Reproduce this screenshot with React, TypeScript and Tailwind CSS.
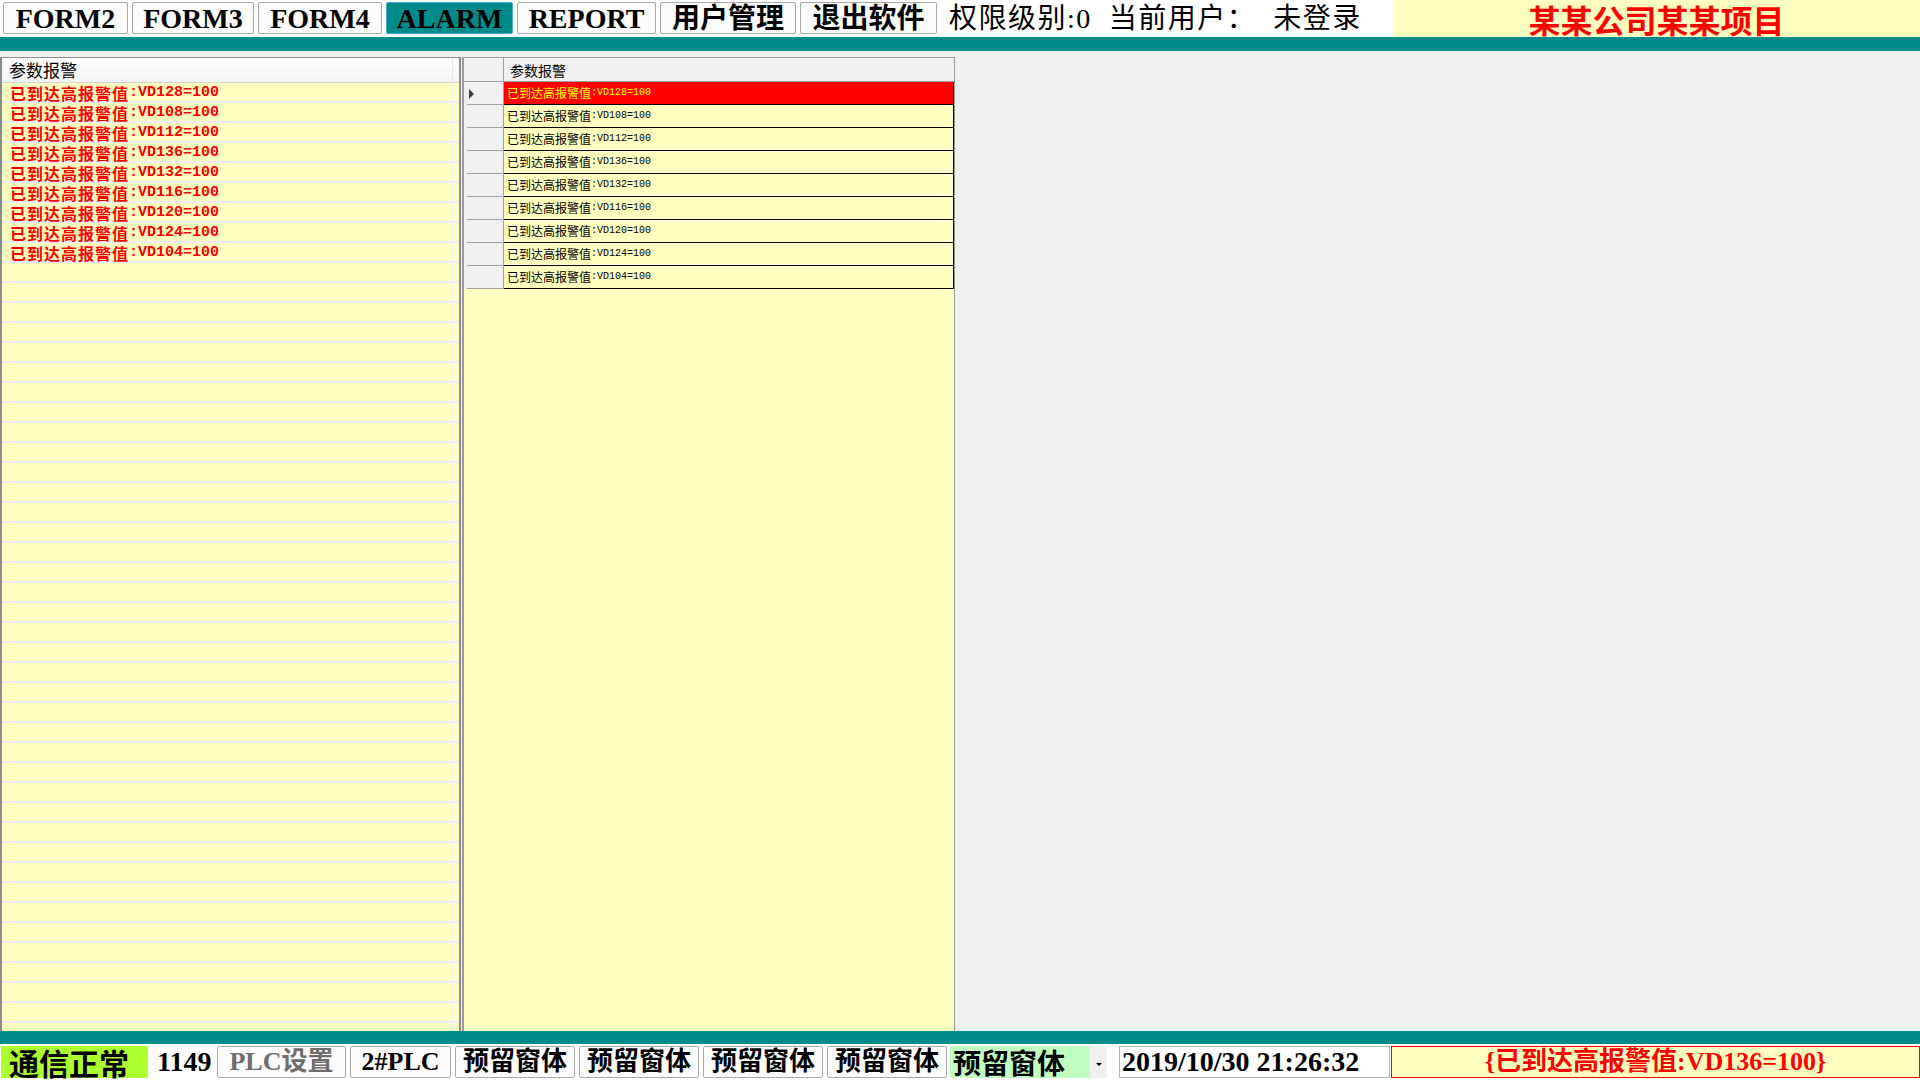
import React from "react";

const alarms = ["VD128", "VD108", "VD112", "VD136", "VD132", "VD116", "VD120", "VD124", "VD104"];

const SERIF = "font-['Liberation_Serif','Noto_Sans_CJK_SC',serif]";

function TopButton({ label, w, active }: { label: string; w: string; active?: boolean }) {
  return (
    <div
      className={`${w} h-[32px] mt-[2px] flex items-center justify-center rounded-[2px] border ${
        active ? "bg-[#008b8b] border-[#4aa8e0]" : "bg-[#fcfcfc] border-[#a9a9a9]"
      } text-[28px] font-bold text-black leading-[30px]`}
    >
      <span className="pt-[1px]">{label}</span>
    </div>
  );
}

function BottomButton({ label, w, disabled }: { label: string; w: string; disabled?: boolean }) {
  return (
    <div
      className={`${w} h-[32px] flex items-center justify-center rounded-[2px] border border-[#a9a9a9] bg-[#fcfcfc] text-[26px] font-bold leading-[30px] ${
        disabled ? "text-[#6d6d6d]" : "text-black"
      }`}
    >
      {label}
    </div>
  );
}

export default function App() {
  const leftRows = Array.from({ length: 48 });
  return (
    <div className={`w-[1920px] h-[1080px] bg-[#f0f0f0] flex flex-col overflow-hidden ${SERIF}`}>
      {/* Top bar */}
      <div className="h-[37px] bg-white flex items-start shrink-0">
        <div className="ml-[3px] flex gap-[4px]">
          <TopButton label="FORM2" w="w-[125px]" />
          <TopButton label="FORM3" w="w-[122px]" />
          <TopButton label="FORM4" w="w-[124px]" />
          <TopButton label="ALARM" w="w-[127px]" active />
          <TopButton label="REPORT" w="w-[139px]" />
          <TopButton label="用户管理" w="w-[136px]" />
          <TopButton label="退出软件" w="w-[137px]" />
        </div>
        <div className="ml-[12px] h-[37px] flex items-center text-[28px] text-black leading-[34px] whitespace-pre tracking-[1.5px]">
          权限级别:0  当前用户：  未登录
        </div>
        <div className="ml-auto w-[527px] h-[37px] bg-[#ffffc0] flex items-center justify-center">
          <span className="text-[32px] font-bold text-[#ff0000] leading-[36px] font-['Noto_Sans_CJK_SC',sans-serif]">
            某某公司某某项目
          </span>
        </div>
      </div>
      <div className="h-[14px] bg-[#008b8b] shrink-0" />

      {/* Main */}
      <div className="flex-1 flex pt-[6px] min-h-0">
        {/* Left list panel */}
        <div className="w-[461px] h-full bg-[#ffffc0] border-l-2 border-r-2 border-t border-[#8c8c8c] flex flex-col overflow-hidden">
          <div className="h-[25px] shrink-0 flex bg-gradient-to-b from-white to-[#f3f3f3] border-b border-[#d5d5d5]">
            <div className="w-[451px] border-r border-[#e3e3e3] pl-[7px] flex items-center text-[17px] text-black font-['Noto_Sans_CJK_SC',sans-serif] leading-[22px]">
              参数报警
            </div>
          </div>
          <div className="flex-1 overflow-hidden">
            {leftRows.map((_, i) => (
              <div key={i} className="h-[20px] flex border-b-2 border-[#ececf6]">
                <div className="w-[451px] border-r border-[#ececf6] pl-[8px] pt-[1px] flex items-center leading-[18px] text-[#ff0000] font-bold">
                  {i < alarms.length && (
                    <>
                      <span className="text-[16px] font-['Noto_Sans_CJK_SC',sans-serif] tracking-[1px]">已到达高报警值</span>
                      <span className="text-[15px] font-['Liberation_Mono',monospace]">:{alarms[i]}=100</span>
                    </>
                  )}
                </div>
              </div>
            ))}
          </div>
        </div>

        {/* Middle grid panel */}
        <div className="ml-[1px] w-[493px] h-full bg-[#ffffc0] border-l-2 border-r border-t border-[#9a9a9a] flex flex-col">
          <div className="h-[24px] flex shrink-0 bg-[#f0f0f0] border-b border-[#a0a0a0]">
            <div className="w-[40px] border-r border-[#a0a0a0]" />
            <div className="flex-1 pl-[6px] flex items-center text-[14px] text-black font-['Noto_Sans_CJK_SC',sans-serif] leading-[20px]">
              参数报警
            </div>
          </div>
          {alarms.map((a, i) => {
            const sel = i === 0;
            return (
              <div key={a} className="h-[23px] flex shrink-0">
                <div className="w-[40px] bg-[#f0f0f0] border-r border-[#a0a0a0] relative flex items-center">
                  <div className="absolute left-[3px] right-0 bottom-0 h-px bg-[#a0a0a0]" />
                  {sel && (
                    <div className="ml-[5px] w-0 h-0 border-y-[5px] border-y-transparent border-l-[5px] border-l-[#404040]" />
                  )}
                </div>
                <div
                  className={`w-[451px] border-b border-r border-black pl-[3px] flex items-center leading-[18px] ${
                    sel ? "bg-[#ff0000] text-[#ffff00]" : "bg-[#ffffc0] text-black"
                  }`}
                >
                  <span className="text-[12px] font-['Noto_Sans_CJK_SC',sans-serif]">已到达高报警值</span>
                  <span className="text-[10px] font-['Liberation_Mono',monospace]">:{a}=100</span>
                </div>
              </div>
            );
          })}
        </div>
        <div className="flex-1" />
      </div>

      <div className="h-[13px] bg-[#008b8b] shrink-0" />

      {/* Bottom bar */}
      <div className="h-[36px] bg-white flex items-start pt-[2px] shrink-0">
        <div className="ml-[1px] w-[147px] h-[32px] bg-[#adff2f] pl-[8px] flex items-center text-[30px] font-bold text-black leading-[32px] font-['Noto_Sans_CJK_SC',sans-serif]">
          通信正常
        </div>
        <div className="ml-[9px] w-[58px] h-[32px] flex items-center text-[28px] font-bold text-black leading-[30px]">1149</div>
        <div className="ml-[2px] flex gap-[4px]">
          <BottomButton label="PLC设置" w="w-[129px]" disabled />
          <BottomButton label="2#PLC" w="w-[101px]" />
          <BottomButton label="预留窗体" w="w-[120px]" />
          <BottomButton label="预留窗体" w="w-[120px]" />
          <BottomButton label="预留窗体" w="w-[120px]" />
          <BottomButton label="预留窗体" w="w-[120px]" />
        </div>
        <div className="ml-[3px] w-[140px] h-[32px] bg-[#c0ffc0] pl-[3px] flex items-center text-[28px] font-bold text-black leading-[32px] font-['Noto_Sans_CJK_SC',sans-serif]">
          预留窗体
        </div>
        <div className="w-[17px] h-[32px] bg-[#f0f0f0] flex items-center justify-center">
          <div className="mt-[4px] w-0 h-0 border-x-[3px] border-x-transparent border-t-[3px] border-t-black" />
        </div>
        <div className="ml-[12px] w-[271px] h-[32px] border border-[#b4b4b4] bg-white pl-[2px] flex items-center text-[28px] font-bold text-black leading-[30px] whitespace-pre">
          2019/10/30 21:26:32
        </div>
        <div className="ml-[1px] w-[529px] h-[32px] border border-[#ff0000] bg-[#ffffc0] flex items-center justify-center text-[26px] font-bold text-[#ff0000] leading-[30px]">
          {"{已到达高报警值:VD136=100}"}
        </div>
      </div>
    </div>
  );
}
